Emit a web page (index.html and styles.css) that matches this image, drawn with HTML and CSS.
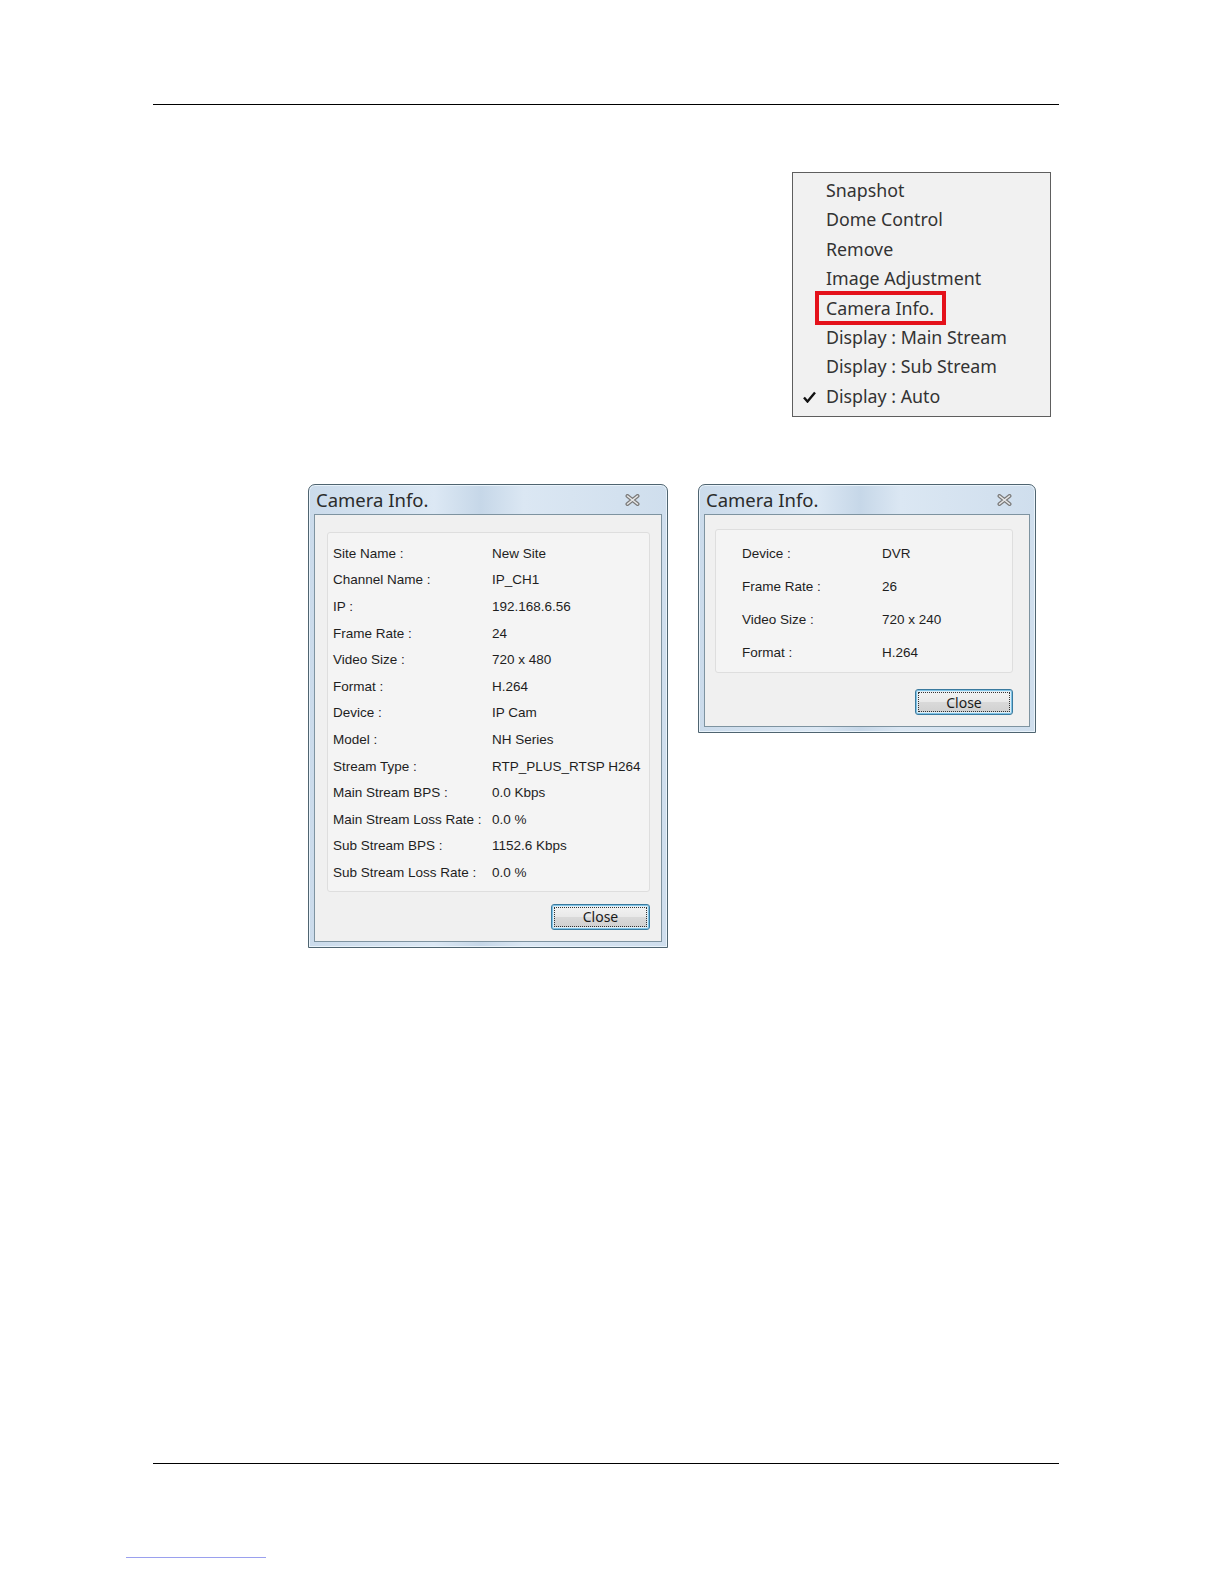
FILE: index.html
```html
<!DOCTYPE html>
<html>
<head>
<meta charset="utf-8">
<link rel="stylesheet" href="styles.css">
</head>
<body>
<div class="page">
  <div class="rule top-rule"></div>

  <div class="menu-row">
    <ul class="menu">
      <li class="item">Snapshot</li>
      <li class="item">Dome Control</li>
      <li class="item">Remove</li>
      <li class="item">Image Adjustment</li>
      <li class="item"><span class="hl">Camera Info.</span></li>
      <li class="item">Display : Main Stream</li>
      <li class="item">Display : Sub Stream</li>
      <li class="item checked"><svg class="check" width="13" height="12" viewBox="0 0 13 12"><path d="M1 6.5 L4.5 10.5 L12 1.5" fill="none" stroke="#111" stroke-width="2.4" stroke-linejoin="miter"/></svg>Display : Auto</li>
    </ul>
  </div>

  <div class="dialogs">
    <div class="dlg dlg-big">
      <div class="title"><span>Camera Info.</span>
        <svg class="x" width="15" height="12" viewBox="0 0 15 12"><path d="M2.5 2 L12.5 10 M12.5 2 L2.5 10" stroke="#7a7a7a" stroke-width="4" stroke-linecap="round"/><path d="M2.5 2 L12.5 10 M12.5 2 L2.5 10" stroke="#e8e8e8" stroke-width="1.6" stroke-linecap="round"/></svg>
      </div>
      <div class="body">
        <div class="group">
          <div class="row"><span class="k">Site Name :</span><span>New Site</span></div>
          <div class="row"><span class="k">Channel Name :</span><span>IP_CH1</span></div>
          <div class="row"><span class="k">IP :</span><span>192.168.6.56</span></div>
          <div class="row"><span class="k">Frame Rate :</span><span>24</span></div>
          <div class="row"><span class="k">Video Size :</span><span>720 x 480</span></div>
          <div class="row"><span class="k">Format :</span><span>H.264</span></div>
          <div class="row"><span class="k">Device :</span><span>IP Cam</span></div>
          <div class="row"><span class="k">Model :</span><span>NH Series</span></div>
          <div class="row"><span class="k">Stream Type :</span><span>RTP_PLUS_RTSP H264</span></div>
          <div class="row"><span class="k">Main Stream BPS :</span><span>0.0 Kbps</span></div>
          <div class="row"><span class="k">Main Stream Loss Rate :</span><span>0.0 %</span></div>
          <div class="row"><span class="k">Sub Stream BPS :</span><span>1152.6 Kbps</span></div>
          <div class="row"><span class="k">Sub Stream Loss Rate :</span><span>0.0 %</span></div>
        </div>
        <div class="btn-row"><button class="btn">Close</button></div>
      </div>
    </div>

    <div class="dlg dlg-small">
      <div class="title"><span>Camera Info.</span>
        <svg class="x" width="15" height="12" viewBox="0 0 15 12"><path d="M2.5 2 L12.5 10 M12.5 2 L2.5 10" stroke="#7a7a7a" stroke-width="4" stroke-linecap="round"/><path d="M2.5 2 L12.5 10 M12.5 2 L2.5 10" stroke="#e8e8e8" stroke-width="1.6" stroke-linecap="round"/></svg>
      </div>
      <div class="body">
        <div class="group">
          <div class="row"><span class="k">Device :</span><span>DVR</span></div>
          <div class="row"><span class="k">Frame Rate :</span><span>26</span></div>
          <div class="row"><span class="k">Video Size :</span><span>720 x 240</span></div>
          <div class="row"><span class="k">Format :</span><span>H.264</span></div>
        </div>
        <div class="btn-row"><button class="btn">Close</button></div>
      </div>
    </div>
  </div>

  <div class="rule bottom-rule"></div>
  <div class="link-line"></div>
</div>
</body>
</html>
```

FILE: styles.css
```css
html, body {
  margin: 0;
  padding: 0;
  background: #ffffff;
}

.page {
  padding-top: 104px;
}

.rule {
  margin-left: 153px;
  width: 906px;
  height: 0;
  border-top: 1.5px solid #000;
}

.menu-row {
  margin-top: 67px;
  padding-left: 792px;
}

.menu {
  list-style: none;
  margin: 0;
  padding: 3px 0 7px 0;
  width: 257px;
  height: 233px;
  border: 1px solid #5e5e5e;
  background: #f1f1f1;
  font-family: "Noto Sans", "Open Sans", sans-serif;
  font-size: 17.8px;
  color: #333333;
}

.item {
  height: 29.4px;
  line-height: 29.4px;
  padding-left: 33px;
  position: relative;
  white-space: nowrap;
}

.hl {
  display: inline-block;
  margin-left: -7px;
  padding: 0 8px 0 7px;
  line-height: 26px;
  outline: 4px solid #e4121b;
}

.check {
  position: absolute;
  left: 10px;
  top: 9px;
}

.dialogs {
  margin-top: 67px;
  padding-left: 308px;
  display: flex;
  align-items: flex-start;
  gap: 30px;
}

.dlg {
  border: 1px solid #4f6470;
  border-radius: 7px 7px 0 0;
  background: linear-gradient(90deg, #cbdbeb 0%, #dce8f4 35%, #c6d7e8 48%, #dbe7f3 60%, #cfdeed 100%);
  padding: 0 5px 5px 5px;
  box-shadow: inset 0 0 0 1px #e9f3fb;
}

.dlg-big { width: 348px; }
.dlg-small { width: 326px; }

.title {
  height: 29px;
  display: flex;
  align-items: center;
  justify-content: space-between;
  padding: 0 22px 0 2px;
  font-family: "Noto Sans", "Open Sans", sans-serif;
  font-size: 18.5px;
  color: #2b2b2b;
}

.dlg-small .title { padding-right: 18px; }

.body {
  border: 1px solid #7e93a0;
  background: #f0f0f0;
  padding: 17px 11px 11px 12px;
}

.dlg-small .body {
  padding: 14px 16px 11px 10px;
}

.group {
  background: #f4f4f4;
  border: 1px solid #dedede;
  border-radius: 3px;
  padding: 7px 0 5px 5px;
  font-family: "Liberation Sans", Arial, sans-serif;
  font-size: 13.5px;
  color: #1e1e1e;
}

.dlg-small .group {
  padding: 7px 0 3px 26px;
}

.row {
  display: flex;
  height: 26.6px;
  align-items: center;
}

.dlg-small .row { height: 33px; }

.k {
  width: 159px;
  flex: none;
}

.dlg-small .k { width: 140px; }

.btn-row {
  display: flex;
  justify-content: flex-end;
  margin-top: 12px;
}

.dlg-small .btn-row { margin-top: 16px; }

.btn {
  width: 99px;
  height: 26px;
  border: 1px solid #3b7a9e;
  border-radius: 3px;
  background: linear-gradient(#f4f4f4 0%, #e9e9e9 48%, #d9d9d9 52%, #cfcfcf 100%);
  box-shadow: inset 0 0 0 1px #7fc3e6, inset 0 0 0 2px #e0eef6;
  outline: 1px dotted #333;
  outline-offset: -4px;
  font-family: "Noto Sans", "Open Sans", sans-serif;
  font-size: 14px;
  color: #1a1a1a;
  padding: 0;
}

.dlg-small .btn { width: 98px; }

.bottom-rule {
  margin-top: 515px;
}

.link-line {
  margin-top: 93px;
  margin-left: 126px;
  width: 140px;
  height: 0;
  border-top: 1px solid #9aa0ee;
}
```
